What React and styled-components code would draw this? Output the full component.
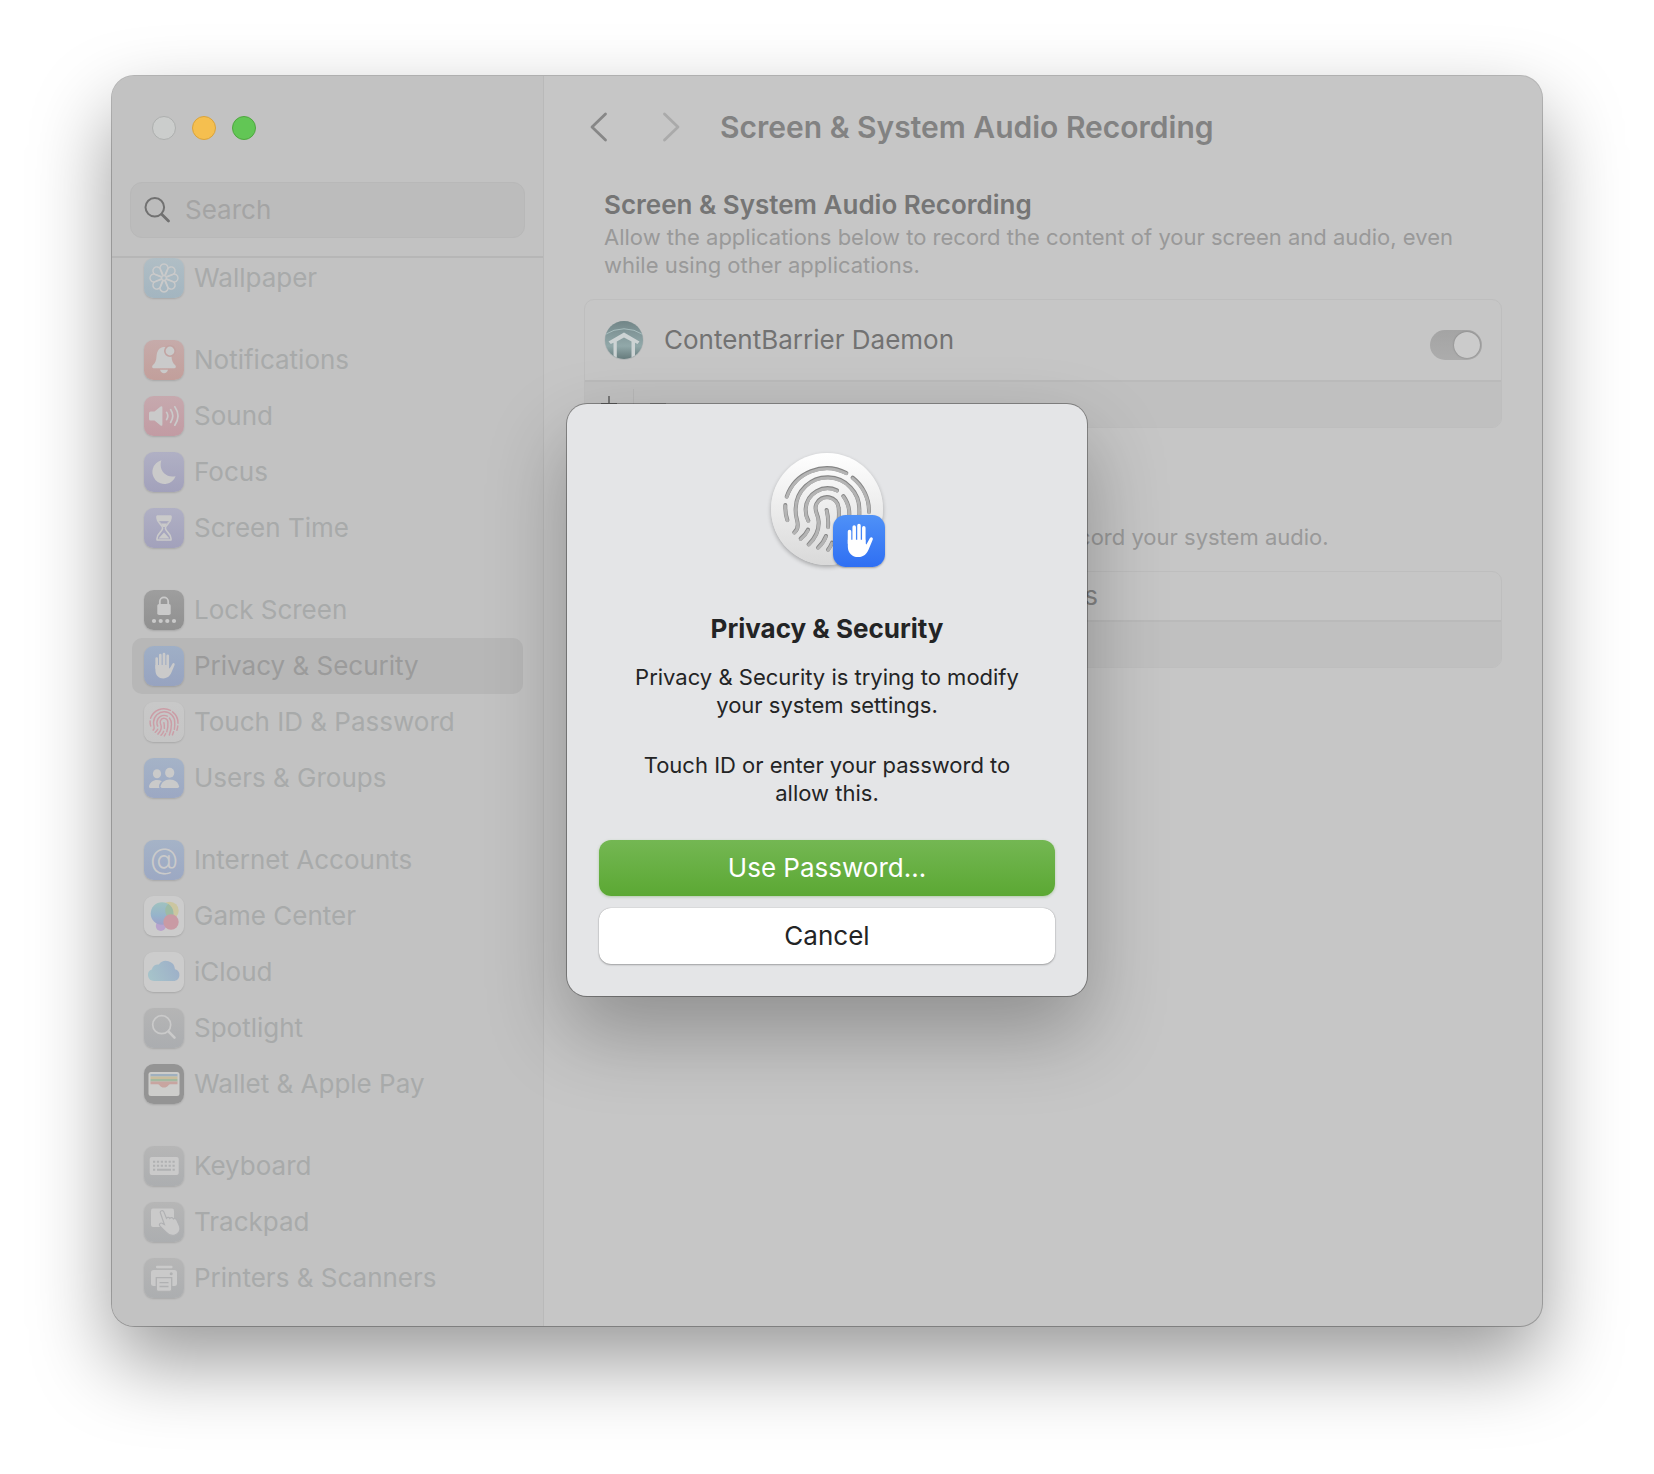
import React, { useState } from "react";
import styled, { createGlobalStyle, css } from "styled-components";

const COLORS = {
  sidebar: "#c2c2c2",
  content: "#c6c6c6",
  line: "#b6b6b6",
  glyph: "#cacaca",
  itemText: "#a8aaaa",
  heading: "#757575",
  secondary: "#999999",
  ink: "#232425",
};

const GlobalStyle = createGlobalStyle`
  *, *::before, *::after {
    box-sizing: border-box;
  }

  body {
    margin: 0;
    background: #ffffff;
    font-family: Inter, "Liberation Sans", sans-serif;
    font-size: 26px;
    line-height: 32px;
  }

  h1, h2, p, ul {
    margin: 0;
    padding: 0;
  }

  ul {
    list-style: none;
  }

  button, input {
    font: inherit;
  }
`;

/* ---------- Window ---------- */

const Desktop = styled.div`
  display: flex;
  min-height: 100vh;
  padding: 76px 112px 148px;
`;

const Window = styled.div`
  position: relative;
  flex: 1;
  display: flex;
  border-radius: 22px;
  background: ${COLORS.content};
  box-shadow:
    0 0 0 1px rgba(0, 0, 0, 0.26),
    0 36px 80px rgba(0, 0, 0, 0.4);
`;

const Sidebar = styled.aside`
  flex: 0 0 432px;
  min-width: 0;
  display: flex;
  flex-direction: column;
  padding-bottom: 20px;
  border-right: 1px solid #b9b9b9;
  border-radius: 22px 0 0 22px;
  background: ${COLORS.sidebar};
`;

const TrafficLights = styled.div`
  display: flex;
  gap: 16px;
  padding: 40px 40px 0;
`;

const Light = styled.button`
  width: 24px;
  height: 24px;
  padding: 0;
  border: 1px solid ${({ $edge }) => $edge};
  border-radius: 50%;
  background: ${({ $fill }) => $fill};
`;

const SearchField = styled.label`
  display: flex;
  align-items: center;
  gap: 13px;
  height: 56px;
  margin: 42px 18px 18px;
  padding: 0 13px;
  border: 1px solid #b8b8b8;
  border-radius: 12px;
  background: #bcbcbc;
`;

const SearchInput = styled.input`
  flex: 1;
  width: 100%;
  min-width: 0;
  padding: 0;
  border: 0;
  outline: 0;
  background: transparent;
  color: ${COLORS.heading};

  &::placeholder {
    color: #a4a4a4;
    opacity: 1;
  }
`;

const Nav = styled.nav`
  overflow: hidden;
  border-top: 2px solid ${COLORS.line};
`;

// the list rests slightly scrolled, so its first row tucks under the search bar
const Groups = styled.div`
  display: flex;
  flex-direction: column;
  gap: 26px;
  margin-top: -8px;
  padding: 0 20px;
`;

const Item = styled.a`
  display: flex;
  align-items: center;
  gap: 10px;
  height: 56px;
  padding: 0 12px;
  border-radius: 10px;
  color: ${COLORS.itemText};
  text-decoration: none;
  white-space: nowrap;

  ${({ $active }) =>
    $active &&
    css`
      background: #b7b7b7;
      color: #9b9b9b;
    `}
`;

const Tile = styled.span`
  display: block;
  flex: none;
  width: ${({ $size }) => $size}px;
  height: ${({ $size }) => $size}px;
  border-radius: 24%;
  background: linear-gradient(${({ $from }) => $from}, ${({ $to }) => $to});
  box-shadow: 0 1px 2px rgba(0, 0, 0, ${({ $shadow }) => $shadow});

  svg {
    display: block;
    width: 100%;
    height: 100%;
  }
`;

/* ---------- Content ---------- */

const Content = styled.main`
  flex: 1;
  min-width: 0;
  padding: 0 40px;
`;

const Toolbar = styled.header`
  display: flex;
  align-items: center;
  height: 102px;
`;

const NavButton = styled.button`
  display: flex;
  width: 32px;
  height: 40px;
  margin-right: 40px;
  padding: 5px;
  border: 0;
  background: transparent;
  color: ${({ $color }) => $color};

  svg {
    flex: none;
  }
`;

const Title = styled.h1`
  margin-left: -8px;
  color: #828282;
  font-size: 30px;
  font-weight: 600;
  white-space: nowrap;
`;

const Section = styled.section`
  margin-bottom: 61px;

  &:first-of-type {
    padding-top: 11px;
  }
`;

const SectionText = styled.div`
  padding: 0 20px 20px;
`;

const SectionTitle = styled.h2`
  color: ${COLORS.heading};
  font-size: 26px;
  font-weight: 600;
`;

const Description = styled.p`
  margin-top: 2px;
  color: ${COLORS.secondary};
  font-size: 22px;
  line-height: 28px;
`;

const Card = styled.div`
  overflow: hidden;
  border: 1px solid #bebebe;
  border-radius: 10px;
`;

const AppRow = styled.label`
  display: flex;
  align-items: center;
  gap: 20px;
  height: 80px;
  padding: 0 19px;
  color: #727272;
`;

const AppName = styled.span`
  flex: 1;
`;

const Switch = styled.input`
  appearance: none;
  display: flex;
  width: 52px;
  height: 30px;
  margin: 10px 0 0;
  padding: 2px;
  border-radius: 15px;
  background: linear-gradient(#a4a4a4, #acacac);

  &::before {
    content: "";
    width: 26px;
    height: 26px;
    border-radius: 50%;
    background: #cbcbcb;
    box-shadow: 0 0 2px rgba(0, 0, 0, 0.3);
  }

  &:checked {
    justify-content: flex-end;
  }
`;

const EmptyRow = styled.p`
  height: 48px;
  color: #858585;
  line-height: 48px;
  text-align: center;
`;

const CardFooter = styled.div`
  display: flex;
  align-items: center;
  height: 47px;
  padding-bottom: 2px;
  border-top: 2px solid #bababa;
  background: #c0c0c0;
`;

const FooterButton = styled.button`
  display: flex;
  align-items: center;
  justify-content: center;
  width: 49px;
  height: 30px;
  padding: 0;
  border: 0;
  border-right: 1px solid ${({ $divided }) => ($divided ? COLORS.line : "transparent")};
  background: transparent;
  color: ${({ $color }) => $color};
`;

/* ---------- Dialog ---------- */

const Overlay = styled.div`
  position: absolute;
  inset: 0;
  display: grid;
  place-items: center;
  padding-bottom: 2px;
`;

const Dialog = styled.div`
  display: flex;
  flex-direction: column;
  align-items: center;
  width: 520px;
  padding: 49px 32px 32px;
  border-radius: 20px;
  background: #e4e5e7;
  box-shadow:
    0 0 0 1px rgba(0, 0, 0, 0.32),
    0 36px 80px rgba(0, 0, 0, 0.28);
  color: ${COLORS.ink};
  text-align: center;
`;

const Emblem = styled.div`
  position: relative;
  width: 112px;
  height: 112px;
  border-radius: 50%;
  background: linear-gradient(#ffffff, #d9d9d9);
  box-shadow: 0 2px 4px rgba(0, 0, 0, 0.28);

  > svg {
    display: block;
  }
`;

const Badge = styled.div`
  position: absolute;
  right: -2px;
  bottom: -2px;
`;

const DialogTitle = styled.h2`
  margin-top: 48px;
  font-size: 26px;
  font-weight: 700;
`;

const Message = styled.p`
  max-width: 400px;
  margin-top: ${({ $gap }) => $gap}px;
  font-size: 22px;
  line-height: 28px;
`;

const Actions = styled.div`
  display: flex;
  flex-direction: column;
  align-self: stretch;
  gap: 12px;
  margin-top: 33px;
`;

const Button = styled.button`
  height: 56px;
  padding: 0;
  border: 0;
  border-radius: 12px;
  background: #ffffff;
  box-shadow:
    0 0 1px rgba(0, 0, 0, 0.35),
    0 1px 2px rgba(0, 0, 0, 0.28);
  color: ${COLORS.ink};

  ${({ $primary }) =>
    $primary &&
    css`
      background: linear-gradient(#74b753, #5ba833);
      box-shadow: 0 1px 3px rgba(80, 150, 50, 0.35);
      color: #ffffff;
    `}
`;

/* ---------- Icons ---------- */

const Glyph = ({ children, ...rest }) => (
  <svg viewBox="0 0 40 40" fill={COLORS.glyph} aria-hidden="true" {...rest}>
    {children}
  </svg>
);

const FINGERPRINT = [
  "M143 200A127 127 0 0 1 322 129",
  "M341 143A127 127 0 0 1 390 246",
  "M139 225Q138 250 145 270",
  "M166 307Q181 295 174 270Q169 252 170 235A95 95 0 0 1 361 240Q362 270 357 300",
  "M294 181A66 66 0 0 0 200 236Q199 256 208 272",
  "M185 326Q200 314 207 299",
  "M313 198Q331 222 331 252Q331 300 312 352",
  "M209 343Q241 312 239 275Q238 262 233 250Q227 234 232 222A35 35 0 0 1 299 234Q303 274 289 322",
  "M263 240Q269 265 267 291",
  "M237 353Q254 337 261 318",
  "M267 359Q274 350 279 338",
  "M388 270Q386 290 380 308",
  "M350 322Q346 336 340 350",
];

const Ridges = ({ width, ...rest }) => (
  <g fill="none" strokeWidth={width} strokeLinecap="round" {...rest}>
    {FINGERPRINT.map((d) => (
      <path key={d} d={d} />
    ))}
  </g>
);

const HandGlyph = ({ fill = COLORS.glyph }) => (
  <Glyph fill={fill}>
    <g stroke={fill} strokeWidth="2.7" strokeLinecap="round">
      <path d="M12.7 12.6V22M16.3 9.2V22M20 8V22M23.7 9.8V22" />
    </g>
    <path d="M11.4 19V24.2C11.4 29.4 14.9 32.4 19.3 32.4C23.6 32.4 26 30 27.4 26.6L30.6 18.9C31.1 17.2 29.2 16.4 28.3 17.9L25.7 22.6L25 22V19Z" />
  </Glyph>
);

const WallpaperGlyph = () => (
  <Glyph fill="none" stroke={COLORS.glyph} strokeWidth="1.4">
    {[0, 45, 90, 135, 180, 225, 270, 315].map((angle) => (
      <path
        key={angle}
        transform={`rotate(${angle} 20 20)`}
        d="M18.600 17.500L16.300 11.500A4 4 0 1 1 23.700 11.500L21.400 17.500"
      />
    ))}
    <circle cx="20" cy="20" r="2.400" />
  </Glyph>
);

const BellGlyph = () => (
  <Glyph>
    <path d="M20 7C14.8 7.4 12.8 11.5 12.5 16.5C12.3 21 11 23.2 8.7 25.3C7.6 26.7 8.2 28.2 9.6 28.2H30.4C31.8 28.2 32.4 26.7 31.3 25.3C29 23.2 27.7 21 27.5 16.5C27.2 11.5 25.2 7.4 20 7Z" />
    <path d="M16 29.8H24C23.4 32 22 33.2 20 33.2S16.6 32 16 29.8Z" />
    <circle cx="26" cy="11" r="5.2" stroke="#c2a3a1" strokeWidth="1.6" />
  </Glyph>
);

const SoundGlyph = () => (
  <Glyph>
    <path d="M5 17.2Q5 15.6 6.6 15.6H10.5L16.6 10.6Q18.4 9.4 18.4 11.6V28.4Q18.4 30.6 16.6 29.4L10.5 24.6H6.6Q5 24.6 5 23Z" />
    <g fill="none" stroke={COLORS.glyph} strokeWidth="1.7" strokeLinecap="round">
      <path d="M22.6 16.4Q25 20 22.6 23.6M26.6 13.6Q31 20 26.6 26.4M30.8 10.8Q37.2 20 30.8 29.2" />
    </g>
  </Glyph>
);

const MoonGlyph = () => (
  <Glyph>
    <path d="M17.4 8.3A12 12 0 1 0 31.6 24.2C22.5 26.6 14 18.4 17.4 8.3Z" />
  </Glyph>
);

const HourglassGlyph = () => (
  <Glyph>
    <path
      fill="none"
      stroke={COLORS.glyph}
      strokeWidth="1.6"
      strokeLinejoin="round"
      d="M13 8.2H27V10C27 15 21.4 16.6 21.4 20.2S27 25.4 27 30.5V32H13V30.5C13 25.4 18.6 23.8 18.6 20.2S13 15 13 10Z"
    />
    <path d="M13 7.6H27V10C27 11.6 26.6 12.6 26 13.6H14C13.4 12.6 13 11.6 13 10ZM15.6 14H24.4L20.8 19H19.2ZM20 24.5L14.5 30.5H25.5Z" />
    <path fill="#a9a8be" d="M15.5 13.3H24.5L22.8 15.5H17.2Z" />
  </Glyph>
);

const LockGlyph = () => (
  <Glyph>
    <path
      fill="none"
      stroke={COLORS.glyph}
      strokeWidth="1.8"
      d="M15.8 15V11.5A4.2 4.2 0 0 1 24.2 11.5V15"
    />
    <rect x="13.3" y="14" width="13.4" height="11" rx="1.8" />
    {[10, 16.7, 23.3, 30].map((cx) => (
      <circle key={cx} cx={cx} cy="31" r="2.1" />
    ))}
  </Glyph>
);

const TouchIdGlyph = () => (
  <svg viewBox="84 54 360 360" aria-hidden="true">
    <Ridges width="13" stroke="#cb9da6" />
  </svg>
);

const UsersGlyph = () => (
  <Glyph>
    <ellipse cx="13" cy="15.7" rx="4.1" ry="4.5" />
    <path d="M15.400 29.9H6.2Q4.6 29.9 5 28.2C5.8 24.4 9 21.9 13 21.9Q15.800 21.9 17.800 23.200C15.400 25.200 14.400 27.700 15.400 29.9Z" />
    <ellipse cx="25.7" cy="14.7" rx="4.6" ry="5" />
    <path d="M25.7 21.4C31 21.4 34.4 24.6 35 28.2Q35.2 29.9 33.6 29.9H18Q16.4 29.9 16.6 28.2C17.4 24.6 20.6 21.4 25.7 21.4Z" />
  </Glyph>
);

const AtGlyph = () => (
  <Glyph>
    <text
      x="20"
      y="29"
      fontFamily="Inter, sans-serif"
      fontSize="29"
      fontWeight="300"
      textAnchor="middle"
    >
      @
    </text>
  </Glyph>
);

const GameCenterGlyph = () => (
  <Glyph>
    <defs>
      <linearGradient id="bubble" x1="0" y1="0" x2="0" y2="1">
        <stop offset="0" stopColor="#9fc2bf" />
        <stop offset="0.6" stopColor="#96b3cb" />
        <stop offset="1" stopColor="#9fa0c9" />
      </linearGradient>
    </defs>
    <circle cx="16.8" cy="30" r="5" fill="#b9a3cd" />
    <circle cx="25.7" cy="14.7" r="9" fill="#cbc6a0" />
    <circle cx="18" cy="17.5" r="11.3" fill="url(#bubble)" />
    <path d="M24.2 8A11.3 11.3 0 0 1 27.9 23.4A9 9 0 0 1 24.2 8Z" fill="#9dbba5" />
    <circle cx="27" cy="26" r="7.7" fill="#c99aa4" />
  </Glyph>
);

const CloudGlyph = () => (
  <Glyph>
    <defs>
      <linearGradient id="cloud" x1="0" y1="0.6" x2="1" y2="0.3">
        <stop offset="0" stopColor="#a6c3ca" />
        <stop offset="1" stopColor="#9dafc8" />
      </linearGradient>
    </defs>
    <path
      fill="url(#cloud)"
      d="M10 29A6 6 0 0 1 7.8 17.4A6.2 6.2 0 0 1 14.8 12.6A9 9 0 0 1 31 17.3A6 6 0 0 1 30.5 29Z"
    />
  </Glyph>
);

const SpotlightGlyph = () => (
  <Glyph fill="none" stroke={COLORS.glyph} strokeLinecap="round">
    <circle cx="17.7" cy="16.7" r="9" strokeWidth="1.7" />
    <path d="M24.6 23.6L30.5 29.6" strokeWidth="2.6" />
  </Glyph>
);

const WalletGlyph = () => (
  <Glyph>
    <rect x="4.5" y="8" width="31" height="24" rx="2.5" fill="#cdcdcb" />
    <path fill="#9fb0bf" d="M6.5 10H33.5V12.5H6.5Z" />
    <path fill="#c9bd9c" d="M6.5 12.5H33.5V15H6.5Z" />
    <path fill="#a3b9a0" d="M6.5 15H33.5V17.5H6.5Z" />
    <path
      fill="#c8a5a0"
      d="M6.5 17.5H33.5V20.3H26C24.4 20.3 24 23.6 20 23.6S15.6 20.3 14 20.3H6.5Z"
    />
  </Glyph>
);

const KeyboardGlyph = () => (
  <Glyph>
    <rect x="5.7" y="11" width="29" height="18" rx="2" />
    <g fill="none" stroke="#b0b1b2" strokeWidth="1.9">
      <path strokeDasharray="2.2 1.7" d="M9 15.8H31.5M9 19.8H31.5" />
      <path d="M9 23.8H11.2M13 23.8H27M28.6 23.8H30.8" />
    </g>
  </Glyph>
);

const TrackpadGlyph = () => (
  <Glyph>
    <rect x="7" y="6.5" width="23" height="18.5" rx="2" />
    <path
      stroke="#b0b1b3"
      strokeWidth="1.2"
      d="M16.4 11C15.6 8.8 18.9 7.6 19.9 9.9L22.4 16.3C23.3 15 25.2 15.2 25.8 16.4C27 15.2 28.8 15.5 29.4 16.9C30.6 16 32.3 16.5 32.9 18.2L35.6 24.3C37 28.5 34.5 31.8 31 33C27.6 34.2 24.5 33 21.8 30L16 24.2C14.4 22.4 16.4 20.2 18.4 21.4L20.4 22.5Z"
    />
  </Glyph>
);

const PrinterGlyph = () => (
  <Glyph>
    <rect x="12" y="7.8" width="16.5" height="2.4" rx="1" />
    <path d="M9.7 12H30.3Q33 12 33 14.7V25.5Q33 28 30.3 28H9.7Q7 28 7 25.5V14.7Q7 12 9.7 12Z" />
    <path
      stroke="#b0b1b2"
      strokeWidth="1.3"
      d="M12.3 19.7H27.7V31.5Q27.7 33.3 26 33.3H14Q12.3 33.3 12.3 31.5Z"
    />
    <circle cx="27.2" cy="15.7" r="1.5" fill="#b0b1b2" />
    <path stroke="#b0b1b2" strokeWidth="1.3" d="M15.5 24.7H24.5M15.5 28.5H24.5" />
  </Glyph>
);

const SearchIcon = () => (
  <svg width="28" height="28" viewBox="0 0 28 28" fill="none" stroke="#717171" aria-hidden="true">
    <circle cx="10.8" cy="11.3" r="9.3" strokeWidth="2" />
    <path d="M17.7 18.2L24.5 25" strokeWidth="2.8" strokeLinecap="round" />
  </svg>
);

const Chevron = ({ d }) => (
  <svg width="20" height="30" viewBox="0 0 20 30" fill="none" stroke="currentColor" aria-hidden="true">
    <path d={d} strokeWidth="2.8" strokeLinecap="round" strokeLinejoin="round" />
  </svg>
);

const DaemonIcon = () => (
  <svg width="40" height="40" viewBox="0 0 40 40" aria-hidden="true">
    <defs>
      <linearGradient id="dome" x1="0" y1="0" x2="0" y2="1">
        <stop offset="0" stopColor="#708486" />
        <stop offset="0.3" stopColor="#819698" />
        <stop offset="0.65" stopColor="#91a8a9" />
        <stop offset="1" stopColor="#637879" />
      </linearGradient>
      <clipPath id="disc">
        <circle cx="20" cy="20" r="19" />
      </clipPath>
    </defs>
    <circle cx="20" cy="20.5" r="19.5" fill="#b3b7b8" />
    <g clipPath="url(#disc)">
      <rect width="40" height="40" fill="url(#dome)" />
      <path d="M0 15Q20 2.5 40 15" fill="none" stroke="#a8bdbe" strokeWidth="1" />
      <path
        d="M20 12.5L4.5 21.5L6.8 24L9.5 22.8V40H12.8V21.5L20 17.6L27.5 21.5V40H31V22.8L33.5 24L35.5 21.5Z"
        fill="#cdd3d4"
      />
    </g>
  </svg>
);

/* ---------- Data ---------- */

const GROUPS = [
  [{ label: "Wallpaper", icon: WallpaperGlyph, from: "#b0bec5", to: "#a3b5c0" }],
  [
    { label: "Notifications", icon: BellGlyph, from: "#c6abaa", to: "#c29f9b" },
    { label: "Sound", icon: SoundGlyph, from: "#c6a9ae", to: "#c29ba3" },
    { label: "Focus", icon: MoonGlyph, from: "#b0b0c4", to: "#a2a1bb" },
    { label: "Screen Time", icon: HourglassGlyph, from: "#b0b0c4", to: "#a2a1bb" },
  ],
  [
    { label: "Lock Screen", icon: LockGlyph, from: "#9e9e9e", to: "#909090" },
    { label: "Privacy & Security", icon: HandGlyph, from: "#9fafc6", to: "#97a3c0", active: true },
    { label: "Touch ID & Password", icon: TouchIdGlyph, from: "#c8c8c8", to: "#c5c5c5" },
    { label: "Users & Groups", icon: UsersGlyph, from: "#a5b3c7", to: "#9ca8c3" },
  ],
  [
    { label: "Internet Accounts", icon: AtGlyph, from: "#a5b3c7", to: "#9ca8c3" },
    { label: "Game Center", icon: GameCenterGlyph, from: "#cccccc", to: "#cccccc" },
    { label: "iCloud", icon: CloudGlyph, from: "#cccccc", to: "#cccccc" },
    { label: "Spotlight", icon: SpotlightGlyph, from: "#b5b5b5", to: "#abadb0" },
    { label: "Wallet & Apple Pay", icon: WalletGlyph, from: "#949494", to: "#949494" },
  ],
  [
    { label: "Keyboard", icon: KeyboardGlyph, from: "#b6b6b6", to: "#acaeb0" },
    { label: "Trackpad", icon: TrackpadGlyph, from: "#b6b6b6", to: "#acaeb0" },
    { label: "Printers & Scanners", icon: PrinterGlyph, from: "#b6b6b6", to: "#acaeb0" },
  ],
];

/* ---------- Components ---------- */

const SettingsItem = ({ label, icon: Icon, from, to, active }) => (
  <li>
    <Item href="#" $active={active} aria-current={active ? "page" : undefined}>
      <Tile $size={40} $from={from} $to={to} $shadow={0.14}>
        <Icon />
      </Tile>
      {label}
    </Item>
  </li>
);

const ListFooter = () => (
  <CardFooter>
    <FooterButton aria-label="Add" $divided $color="#777777">
      <svg width="18" height="18" viewBox="0 0 18 18" stroke="currentColor" strokeWidth="2">
        <path d="M9 1V17M1 9H17" />
      </svg>
    </FooterButton>
    <FooterButton aria-label="Remove" $color="#9b9b9b">
      <svg width="18" height="18" viewBox="0 0 18 18" stroke="currentColor" strokeWidth="2">
        <path d="M1 9H17" />
      </svg>
    </FooterButton>
  </CardFooter>
);

const AuthDialog = () => (
  <Overlay>
    <Dialog role="dialog" aria-modal="true" aria-labelledby="auth-title">
      <Emblem>
        <svg width="112" height="112" viewBox="96 69 336 336" aria-hidden="true">
          <Ridges width="12" stroke="#858585" />
          <Ridges width="9" stroke="#b4b4b4" transform="translate(0 2)" />
        </svg>
        <Badge>
          <Tile $size={52} $from="#4f91f7" $to="#2f6ff3" $shadow={0.3}>
            <HandGlyph fill="#ffffff" />
          </Tile>
        </Badge>
      </Emblem>
      <DialogTitle id="auth-title">Privacy &amp; Security</DialogTitle>
      <Message $gap={18}>
        Privacy &amp; Security is trying to modify
        <br />
        your system settings.
      </Message>
      <Message $gap={32}>
        Touch ID or enter your password to
        <br />
        allow this.
      </Message>
      <Actions>
        <Button $primary>Use Password…</Button>
        <Button>Cancel</Button>
      </Actions>
    </Dialog>
  </Overlay>
);

const App = () => {
  const [allowed, setAllowed] = useState(true);

  return (
    <>
      <GlobalStyle />
      <Desktop>
        <Window>
          <Sidebar>
            <TrafficLights>
              <Light aria-label="Close" $fill="#cbcdcc" $edge="#adafae" />
              <Light aria-label="Minimize" $fill="#f5bf4f" $edge="#d9a33b" />
              <Light aria-label="Zoom" $fill="#62c655" $edge="#4fa73f" />
            </TrafficLights>
            <SearchField>
              <SearchIcon />
              <SearchInput type="text" placeholder="Search" aria-label="Search" />
            </SearchField>
            <Nav>
              <Groups>
                {GROUPS.map((items) => (
                  <ul key={items[0].label}>
                    {items.map((item) => (
                      <SettingsItem key={item.label} {...item} />
                    ))}
                  </ul>
                ))}
              </Groups>
            </Nav>
          </Sidebar>

          <Content>
            <Toolbar>
              <NavButton aria-label="Back" $color="#878787">
                <Chevron d="M16.5 2L3 15L16.5 28" />
              </NavButton>
              <NavButton aria-label="Forward" $color="#aaaaaa">
                <Chevron d="M3.5 2L17 15L3.5 28" />
              </NavButton>
              <Title>Screen &amp; System Audio Recording</Title>
            </Toolbar>

            <Section>
              <SectionText>
                <SectionTitle>Screen &amp; System Audio Recording</SectionTitle>
                <Description>
                  Allow the applications below to record the content of your screen and audio, even
                  while using other applications.
                </Description>
              </SectionText>
              <Card>
                <AppRow>
                  <DaemonIcon />
                  <AppName>ContentBarrier Daemon</AppName>
                  <Switch
                    type="checkbox"
                    role="switch"
                    checked={allowed}
                    onChange={(event) => setAllowed(event.target.checked)}
                  />
                </AppRow>
                <ListFooter />
              </Card>
            </Section>

            <Section>
              <SectionText>
                <SectionTitle>System Audio Recording Only</SectionTitle>
                <Description>
                  Allow the applications below to access and record your system audio.
                </Description>
              </SectionText>
              <Card>
                <EmptyRow>No Items</EmptyRow>
                <ListFooter />
              </Card>
            </Section>
          </Content>

          <AuthDialog />
        </Window>
      </Desktop>
    </>
  );
};

export default App;
